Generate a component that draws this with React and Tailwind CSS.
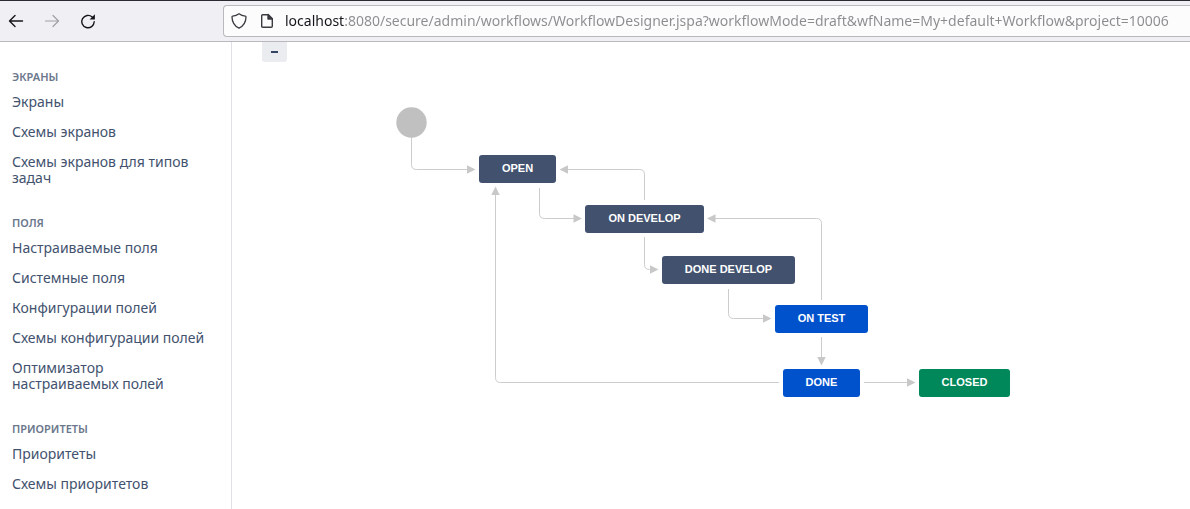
const groups = [
  { title: "ЭКРАНЫ", items: ["Экраны", "Схемы экранов", "Схемы экранов для типов задач"] },
  {
    title: "ПОЛЯ",
    items: [
      "Настраиваемые поля",
      "Системные поля",
      "Конфигурации полей",
      "Схемы конфигурации полей",
      "Оптимизатор настраиваемых полей",
    ],
  },
  { title: "ПРИОРИТЕТЫ", items: ["Приоритеты", "Схемы приоритетов"] },
];

const statuses = [
  { name: "OPEN", style: "left-[247px] top-[113px] w-[77px] bg-[#42526e]" },
  { name: "ON DEVELOP", style: "left-[353px] top-[163px] w-[119px] bg-[#42526e]" },
  { name: "DONE DEVELOP", style: "left-[430px] top-[214px] w-[133px] bg-[#42526e]" },
  { name: "ON TEST", style: "left-[543px] top-[263px] w-[93px] bg-[#0052cc]" },
  { name: "DONE", style: "left-[551px] top-[327px] w-[77px] bg-[#0052cc]" },
  { name: "CLOSED", style: "left-[687px] top-[327px] w-[91px] bg-[#00875a]" },
];

// Each transition: line path and the position and heading of its arrow head.
const transitions = [
  { d: "M179.5 95V122.5Q179.5 127.5 184.5 127.5H236", x: 243.5, y: 127.5, angle: 0 },
  { d: "M412.5 158V132.5Q412.5 127.5 407.5 127.5H335", x: 327.5, y: 127.5, angle: 180 },
  { d: "M307.5 146V171.5Q307.5 176.5 312.5 176.5H342", x: 350, y: 176.5, angle: 0 },
  { d: "M589.5 258V181.5Q589.5 176.5 584.5 176.5H483", x: 475, y: 176.5, angle: 180 },
  { d: "M412.5 195V222.5Q412.5 227.5 417.5 227.5H419", x: 426.5, y: 227.5, angle: 0 },
  { d: "M496.5 247V271.5Q496.5 276.5 501.5 276.5H532", x: 539.5, y: 276.5, angle: 0 },
  { d: "M589.5 295V316", x: 589.5, y: 323.5, angle: 90 },
  { d: "M632 340.5H676", x: 683.5, y: 340.5, angle: 0 },
  { d: "M547 340.5H268.5Q263.5 340.5 263.5 335.5V152", x: 263.5, y: 144.5, angle: 270 },
];

function BackIcon() {
  return (
    <svg width="16" height="16" viewBox="0 0 16 16" fill="none" stroke="currentColor" strokeWidth="1.4" strokeLinecap="round" strokeLinejoin="round" aria-hidden="true">
      <path d="M14.5 8H1.5M7 2.5L1.5 8L7 13.5" />
    </svg>
  );
}

function ForwardIcon() {
  return (
    <svg width="16" height="16" viewBox="0 0 16 16" fill="none" stroke="currentColor" strokeWidth="1.2" strokeLinecap="round" strokeLinejoin="round" aria-hidden="true">
      <path d="M1.5 8H14.5M9 2.5L14.5 8L9 13.5" />
    </svg>
  );
}

function ReloadIcon() {
  return (
    <svg width="16" height="16" viewBox="0 0 16 16" fill="none" stroke="currentColor" strokeWidth="1.4" strokeLinecap="round" aria-hidden="true">
      <path d="M12.2 4A6.2 6.2 0 1 0 14.2 8.8" />
      <path d="M14.9 1.2V6.5H9.6Z" fill="currentColor" stroke="none" />
    </svg>
  );
}

function ShieldIcon() {
  return (
    <svg width="16" height="16" viewBox="0 0 16 16" fill="none" stroke="#3a3a40" strokeWidth="1.3" strokeLinejoin="round" aria-hidden="true">
      <path d="M8 .8C6.2 2.2 3.8 3 1.7 3.1C1.2 3.2 1 3.5 1 4C1.1 9 3.4 13 8 15.2C12.6 13 14.9 9 15 4C15 3.5 14.8 3.2 14.3 3.1C12.2 3 9.8 2.2 8 .8Z" />
    </svg>
  );
}

function PageIcon() {
  return (
    <svg width="16" height="16" viewBox="0 0 16 16" fill="none" stroke="#3a3a40" strokeWidth="1.4" strokeLinejoin="round" aria-hidden="true">
      <path d="M3.7 1.7H9.3L13.3 5.7V13.2Q13.3 14.3 12.2 14.3H3.8Q2.7 14.3 2.7 13.2V2.7Q2.7 1.7 3.7 1.7Z" />
      <path d="M9 1.6V6H13.3Z" fill="#3a3a40" />
    </svg>
  );
}

function BrowserBar() {
  return (
    <header className="flex h-[42px] items-center border-t border-b border-t-[#2b2a33] border-b-[#b9b9bd] bg-[#f0f0f4] pl-2">
      <div className="flex shrink-0 items-center gap-5 text-[#15141a]">
        <button type="button" aria-label="Back"><BackIcon /></button>
        <button type="button" aria-label="Forward" disabled className="text-[#a0a0a4]"><ForwardIcon /></button>
        <button type="button" aria-label="Reload"><ReloadIcon /></button>
      </div>
      <div className="ml-[127px] flex h-8 min-w-0 flex-1 items-center rounded-l border border-r-0 border-[#b9b9bd] bg-[#fcfcfd] pl-[7px]">
        <div className="flex shrink-0 gap-3">
          <ShieldIcon />
          <PageIcon />
        </div>
        <input
          type="text"
          aria-label="Address"
          spellCheck={false}
          defaultValue="localhost:8080/secure/admin/workflows/WorkflowDesigner.jspa?workflowMode=draft&wfName=My+default+Workflow&project=10006"
          className="ml-[10px] h-7 min-w-0 flex-1 bg-[linear-gradient(to_right,#15141a_59px,#8c8c8f_59px)] bg-clip-text pb-0.5 text-[14px] text-[#8c8c8f] outline-none [-webkit-text-fill-color:transparent]"
        />
      </div>
    </header>
  );
}

function Sidebar() {
  return (
    <nav className="flex w-[232px] shrink-0 flex-col gap-5 border-r border-[#dfe1e6] pt-[25px] pr-5 pb-[10px] pl-3">
      {groups.map((group) => (
        <section key={group.title}>
          <h2 className="text-[11px] leading-5 font-semibold text-[#6b778c]">{group.title}</h2>
          <ul>
            {group.items.map((item) => (
              <li key={item} className="py-[7px] text-[14px] leading-4 text-[#42526e]">
                <a href="#" className="block">{item}</a>
              </li>
            ))}
          </ul>
        </section>
      ))}
    </nav>
  );
}

function Designer() {
  return (
    <main className="relative min-w-0 flex-1 overflow-hidden">
      <button
        type="button"
        aria-label="Zoom out"
        className="ml-[30px] flex h-5 w-[25px] items-center justify-center rounded-b-[3px] bg-[#ebecf0]"
      >
        <svg width="7" height="2" viewBox="0 0 7 2" aria-hidden="true">
          <path d="M0 0H7V2H0Z" fill="#344563" />
        </svg>
      </button>
      <svg className="absolute top-0 left-0" width="800" height="400" viewBox="0 0 800 400" fill="none" aria-hidden="true">
        {transitions.map((t) => (
          <g key={t.d}>
            <path d={t.d} stroke="#cccccc" />
            <path d="M0 0L-8.5 -4.2V4.2Z" fill="#c8c8c8" transform={`translate(${t.x} ${t.y}) rotate(${t.angle})`} />
          </g>
        ))}
        <circle cx="179.5" cy="80.5" r="15.2" fill="#c0c0c0" />
      </svg>
      {statuses.map((s) => (
        <div
          key={s.name}
          className={`absolute flex h-7 items-center justify-center rounded-[3px] pb-0.5 font-['Liberation_Sans',Arial,sans-serif] text-[11px] leading-4 font-bold whitespace-nowrap text-white ${s.style}`}
        >
          {s.name}
        </div>
      ))}
    </main>
  );
}

export default function App() {
  return (
    <div className="flex min-h-screen flex-col bg-white font-['Noto_Sans',sans-serif]">
      <BrowserBar />
      <div className="flex flex-1">
        <Sidebar />
        <Designer />
      </div>
    </div>
  );
}
